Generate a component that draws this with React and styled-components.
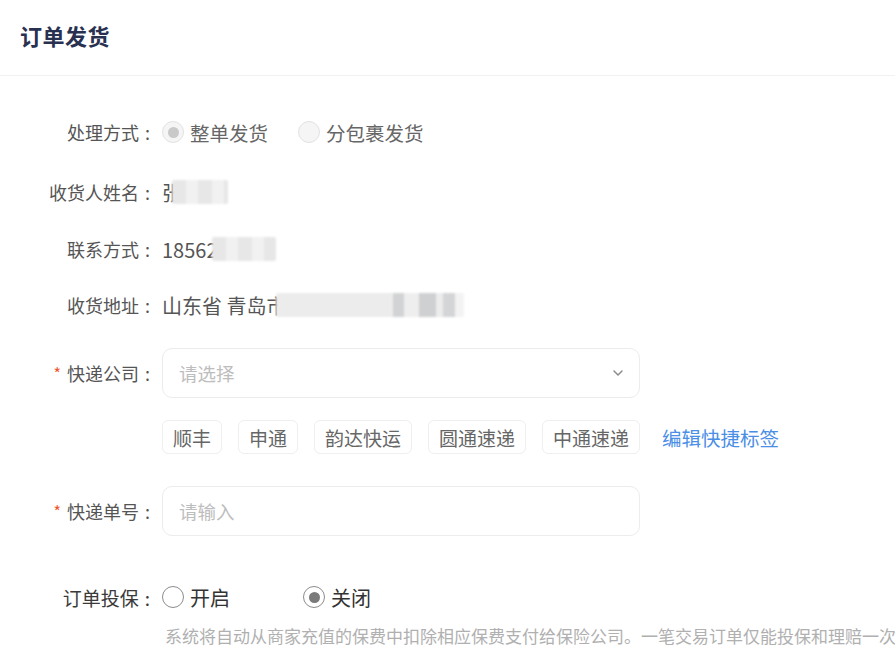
import React, { useState } from 'react';
import styled, { createGlobalStyle } from 'styled-components';

const GlobalStyle = createGlobalStyle`
  html, body {
    margin: 0;
    padding: 0;
    background: #fff;
    overflow: hidden;
  }
  body {
    font-family: "Noto Sans CJK SC", "Noto Sans", sans-serif;
  }
`;

const Page = styled.div`
  width: 895px;
  height: 659px;
  overflow: hidden;
  background: #fff;
`;

const Header = styled.div`
  height: 76px;
  display: flex;
  align-items: flex-start;
  padding: 19px 0 0 20px;
  border-bottom: 1px solid #f1f1f1;
  box-sizing: border-box;
`;

const Title = styled.h1`
  margin: 0;
  font-size: 22px;
  line-height: 32px;
  font-weight: 600;
  color: #283150;
  letter-spacing: 0.5px;
`;

const Form = styled.div`
  display: flex;
  flex-direction: column;
  padding-top: 38px;
`;

const Row = styled.div`
  display: flex;
  align-items: center;
  min-height: 36px;
  margin-top: ${(p) => p.$mt || 0}px;
`;

const Label = styled.div`
  width: 162px;
  flex-shrink: 0;
  font-size: ${(p) => (p.$alt ? 19 : 18)}px;
  color: ${(p) => (p.$alt ? '#3a3a3a' : '#555')};
  display: flex;
  justify-content: flex-end;
  align-items: center;
  white-space: nowrap;
`;

const Colon = styled.span`
  margin: 0 12px 0 6px;
`;

const Star = styled.span`
  color: #f0552b;
  font-size: 16px;
  margin-right: 6px;
  line-height: 1;
`;

const Value = styled.div`
  font-size: 20px;
  color: #555;
  display: flex;
  align-items: center;
  white-space: nowrap;
`;

const Mosaic = styled.span`
  display: inline-block;
  height: 24px;
  width: ${(p) => p.$w}px;
  margin-left: ${(p) => p.$ml || 0}px;
  background: ${(p) =>
    p.$dark
      ? 'linear-gradient(90deg, #ececec 0 62%, #d2d3d5 62% 68%, #eeeeee 68% 76%, #cfd0d2 76% 85%, #ececec 85% 89%, #d4d5d7 89% 95%, #f3f3f3 95%)'
      : 'repeating-linear-gradient(90deg, #e7e7e8 0 14px, #f1f1f1 14px 26px)'};
  filter: blur(1.2px);
  border-radius: 2px;
`;

const RadioGroup = styled.div`
  display: flex;
  align-items: center;
  gap: ${(p) => p.$gap}px;
`;

const RadioItem = styled.label`
  display: flex;
  align-items: center;
  gap: 6px;
  font-size: ${(p) => (p.$alt ? 20 : 19.5)}px;
  color: ${(p) => (p.$alt ? '#333' : '#666')};
  cursor: pointer;
`;

const Circle = styled.span`
  width: 22px;
  height: 22px;
  border-radius: 50%;
  box-sizing: border-box;
  display: flex;
  align-items: center;
  justify-content: center;
  border: ${(p) => (p.$disabled ? '1px solid #e2e2e2' : '1.5px solid #8c8c8c')};
  background: ${(p) => (p.$disabled ? '#f5f5f5' : '#fff')};

  &::after {
    content: '';
    width: 11px;
    height: 11px;
    border-radius: 50%;
    background: ${(p) => (p.$disabled ? '#c9c9c9' : '#7a7a7a')};
    display: ${(p) => (p.$checked ? 'block' : 'none')};
  }
`;

const Field = styled.div`
  width: 478px;
  height: 50px;
  box-sizing: border-box;
  border: 1px solid #ececec;
  border-radius: 10px;
  display: flex;
  align-items: center;
  justify-content: space-between;
  padding: 0 13px 0 16px;
  font-size: 18.5px;
  color: #bdbdbd;
`;

const Tags = styled.div`
  display: flex;
  align-items: center;
  gap: 16px;
  margin-left: 162px;
  margin-top: ${(p) => p.$mt}px;
`;

const Tag = styled.span`
  height: 34px;
  box-sizing: border-box;
  padding: 0 10px;
  border: 1px solid #efefef;
  border-radius: 6px;
  display: flex;
  align-items: center;
  font-size: 19px;
  color: #666;
`;

const Link = styled.a`
  font-size: 19.5px;
  color: #4a8ee6;
  margin-left: 6px;
  cursor: pointer;
`;

const Help = styled.div`
  margin-left: 165px;
  margin-top: 10px;
  font-size: 17px;
  line-height: 22px;
  color: #b0b0b0;
  white-space: nowrap;
`;

const Chevron = () => (
  <svg width="16" height="16" viewBox="0 0 24 24" fill="none" stroke="#8a8a8a" strokeWidth="2.2" strokeLinecap="round" strokeLinejoin="round">
    <path d="M6 9l6 6 6-6" />
  </svg>
);

const tags = ['顺丰', '申通', '韵达快运', '圆通速递', '中通速递'];

const App = () => {
  const [insure, setInsure] = useState('off');

  return (
    <Page>
      <GlobalStyle />
      <Header>
        <Title>订单发货</Title>
      </Header>
      <Form>
        <Row>
          <Label>处理方式<Colon>:</Colon></Label>
          <RadioGroup $gap={30}>
            <RadioItem>
              <Circle $disabled $checked />
              整单发货
            </RadioItem>
            <RadioItem>
              <Circle $disabled />
              分包裹发货
            </RadioItem>
          </RadioGroup>
        </Row>
        <Row $mt={24}>
          <Label>收货人姓名<Colon>:</Colon></Label>
          <Value>
            张<Mosaic $w={56} $ml={-10} />
          </Value>
        </Row>
        <Row $mt={21}>
          <Label>联系方式<Colon>:</Colon></Label>
          <Value>
            18562<Mosaic $w={64} $ml={-6} />
          </Value>
        </Row>
        <Row $mt={20}>
          <Label>收货地址<Colon>:</Colon></Label>
          <Value>
            山东省 青岛市<Mosaic $w={188} $ml={-10} $dark />
          </Value>
        </Row>
        <Row $mt={25}>
          <Label>
            <Star>*</Star>快递公司<Colon>:</Colon>
          </Label>
          <Field>
            请选择
            <Chevron />
          </Field>
        </Row>
        <Tags $mt={22}>
          {tags.map((t) => (
            <Tag key={t}>{t}</Tag>
          ))}
          <Link>编辑快捷标签</Link>
        </Tags>
        <Row $mt={32}>
          <Label>
            <Star>*</Star>快递单号<Colon>:</Colon>
          </Label>
          <Field>请输入</Field>
        </Row>
        <Row $mt={43}>
          <Label $alt>订单投保<Colon>:</Colon></Label>
          <RadioGroup $gap={73}>
            <RadioItem $alt onClick={() => setInsure('on')}>
              <Circle $checked={insure === 'on'} />
              开启
            </RadioItem>
            <RadioItem $alt onClick={() => setInsure('off')}>
              <Circle $checked={insure === 'off'} />
              关闭
            </RadioItem>
          </RadioGroup>
        </Row>
        <Help>系统将自动从商家充值的保费中扣除相应保费支付给保险公司。一笔交易订单仅能投保和理赔一次</Help>
      </Form>
    </Page>
  );
};

export default App;
